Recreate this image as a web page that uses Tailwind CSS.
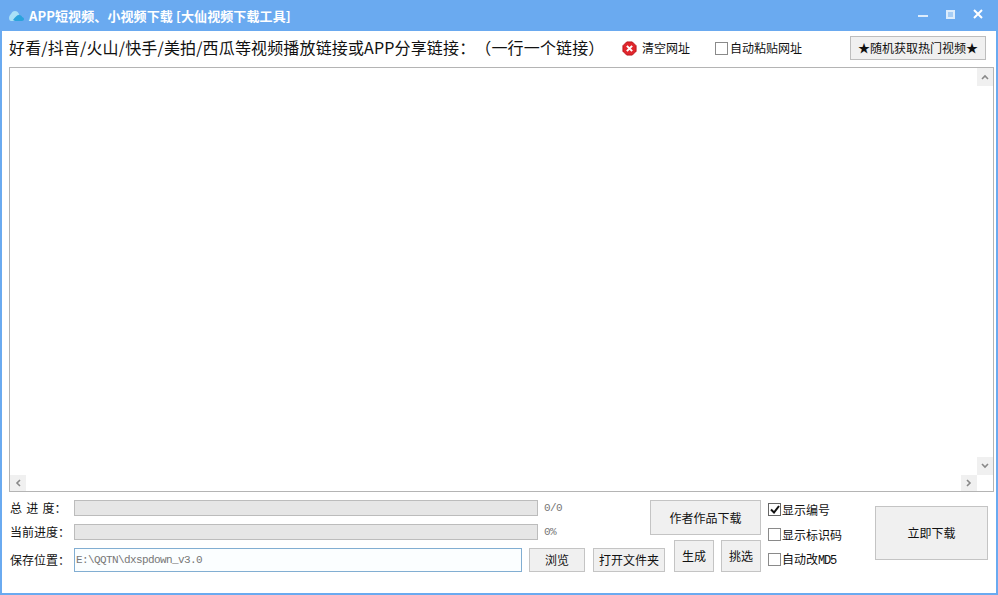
<!DOCTYPE html>
<html lang="zh-CN">
<head>
    <meta charset="UTF-8">
    <title>APP短视频、小视频下载</title>
    <script src="https://cdn.jsdelivr.net/npm/@tailwindcss/browser@4"></script>
</head>
<body class="w-[998px] h-[595px] overflow-hidden bg-white font-['Noto_Sans_CJK_SC',sans-serif] text-[#111] [text-spacing-trim:space-all]">
    <div class="h-[595px] flex flex-col border-x-[2px] border-b-[2px] border-[#6aaaf0]">
        <!-- title bar -->
        <header class="h-[31px] -mx-[2px] shrink-0 bg-[#6aaaf0] flex items-center pl-[8px] pr-[15px] text-white">
            <svg class="w-[17px] h-[14px] mr-[4px]" viewBox="0 0 17 14">
                <path d="M1 9c0-2 1-3 2-4 1-2 2-3 4-3s3 1 4 3l-1 5-3 2H3C2 12 1 11 1 9z" fill="#a9e0f7"/>
                <path d="M5 11c2-3 4-5 6-5 2 0 3 1 3 2 1 0 2 1 2 2s-1 2-2 2H7z" fill="#2ba3dc"/>
            </svg>
            <h1 class="text-[13px] font-bold leading-none tracking-[0.1px]">APP短视频、小视频下载 [大仙视频下载工具]</h1>
            <div class="ml-auto flex items-center gap-[18px]">
                <svg class="w-[10px] h-[10px] mb-[3px]" viewBox="0 0 10 10"><rect y="6" width="10" height="2" fill="#dcecfc"/></svg>
                <svg class="w-[9px] h-[9px] mb-[3px]" viewBox="0 0 9 9"><rect x="1" y="1" width="7" height="7" fill="#a6cdf5" stroke="#dcecfc" stroke-width="2"/></svg>
                <svg class="w-[10px] h-[10px] mb-[3px]" viewBox="0 0 10 10"><path d="M1 1l8 8M9 1l-8 8" stroke="#fff" stroke-width="2"/></svg>
            </div>
        </header>

        <!-- url toolbar -->
        <div class="h-[36px] shrink-0 flex items-center pl-[7px] pr-[10px] pb-[2px]">
            <p class="w-[604px] mb-[2px] text-[16px] leading-none whitespace-nowrap tracking-[0.15px]">好看/抖音/火山/快手/美拍/西瓜等视频播放链接或APP分享链接：（一行一个链接）</p>
            <svg class="w-[15px] h-[15px] ml-[9px]" viewBox="0 0 16 16">
                <path d="M5 1h6l4 4v6l-4 4H5l-4-4V5z" fill="#e0262c" stroke="#b8141a"/>
                <path d="M5.2 5.2l5.6 5.6M10.8 5.2l-5.6 5.6" stroke="#fff" stroke-width="2.2"/>
            </svg>
            <span class="ml-[5px] text-[12px] leading-none">清空网址</span>
            <span class="ml-[25px] w-[13px] h-[13px] border border-[#8a8a8a] bg-white"></span>
            <span class="ml-[2px] text-[12px] leading-none">自动粘贴网址</span>
            <button class="ml-auto w-[136px] h-[24px] bg-[#f0f0f0] border border-[#bdbdbd] text-[12px] leading-none">★随机获取热门视频★</button>
        </div>

        <!-- url list -->
        <div class="ml-[7px] mr-[2px] h-[425px] shrink-0 border border-[#b4b4b4] bg-white flex flex-col">
            <div class="flex-1 flex justify-end">
                <div class="w-[16px] flex flex-col justify-between">
                    <span class="h-[18px] bg-[#f0f0f0] flex items-center justify-center">
                        <svg class="w-[8px] h-[6px]" viewBox="0 0 8 6"><path d="M1 5l3-3 3 3" fill="none" stroke="#888" stroke-width="1.6"/></svg>
                    </span>
                    <span class="h-[18px] bg-[#f0f0f0] flex items-center justify-center">
                        <svg class="w-[8px] h-[6px]" viewBox="0 0 8 6"><path d="M1 1l3 3 3-3" fill="none" stroke="#888" stroke-width="1.6"/></svg>
                    </span>
                </div>
            </div>
            <div class="h-[16px] flex justify-between pr-[16px]">
                <span class="w-[16px] bg-[#f0f0f0] flex items-center justify-center">
                    <svg class="w-[6px] h-[8px]" viewBox="0 0 6 8"><path d="M5 1L2 4l3 3" fill="none" stroke="#888" stroke-width="1.6"/></svg>
                </span>
                <span class="w-[16px] bg-[#f0f0f0] flex items-center justify-center">
                    <svg class="w-[6px] h-[8px]" viewBox="0 0 6 8"><path d="M1 1l3 3-3 3" fill="none" stroke="#888" stroke-width="1.6"/></svg>
                </span>
            </div>
        </div>

        <!-- download controls -->
        <div class="flex-1 flex text-[12px] leading-none pl-[8px] pt-[8px]">
            <div class="w-[655px] shrink-0 flex flex-col gap-[8px]">
                <div class="flex items-center h-[16px]">
                    <span class="w-[64px] whitespace-pre [word-spacing:1.5px]">总 进 度：</span>
                    <div class="w-[464px] h-[16px] bg-[#e6e6e6] border border-[#bcbcbc]"></div>
                    <span class="ml-[6px] text-[#777] text-[11px] tracking-[-0.6px] font-['Liberation_Mono',monospace]">0/0</span>
                </div>
                <div class="flex items-center h-[16px]">
                    <span class="w-[64px]">当前进度：</span>
                    <div class="w-[464px] h-[16px] bg-[#e6e6e6] border border-[#bcbcbc]"></div>
                    <span class="ml-[6px] text-[#777] text-[11px] tracking-[-0.6px] font-['Liberation_Mono',monospace]">0%</span>
                </div>
                <div class="flex items-center h-[24px]">
                    <span class="w-[64px]">保存位置：</span>
                    <div class="w-[448px] h-[24px] border border-[#82aed2] bg-[#fbfeff] flex items-center pl-[1px] text-[#777] text-[11px] tracking-[-0.6px] font-['Liberation_Mono',monospace]">E:\QQTN\dxspdown_v3.0</div>
                    <button class="ml-[7px] w-[56px] h-[24px] bg-[#f0f0f0] border border-[#c4c4c4]">浏览</button>
                    <button class="ml-[8px] w-[72px] h-[24px] bg-[#f0f0f0] border border-[#c4c4c4]">打开文件夹</button>
                </div>
            </div>
            <div class="w-[111px] shrink-0 -ml-[15px] flex flex-col justify-between h-[72px]">
                <button class="w-[111px] h-[35px] bg-[#f0f0f0] border border-[#c4c4c4]">作者作品下载</button>
                <div class="flex justify-between">
                    <button class="ml-[24px] w-[40px] h-[32px] bg-[#f0f0f0] border border-[#c4c4c4]">生成</button>
                    <button class="w-[40px] h-[32px] bg-[#f0f0f0] border border-[#c4c4c4]">挑选</button>
                </div>
            </div>
            <div class="ml-[7px] w-[107px] shrink-0 flex flex-col gap-[12px] pt-[3px]">
                <label class="flex items-center gap-[1px] h-[13px]">
                    <span class="w-[13px] h-[13px] border border-[#666] flex items-center justify-center">
                        <svg class="w-[10px] h-[9px]" viewBox="0 0 10 9"><path d="M1 4.5l3 3 5-6.5" fill="none" stroke="#111" stroke-width="2"/></svg>
                    </span>显示编号
                </label>
                <label class="flex items-center gap-[1px] h-[13px]">
                    <span class="w-[13px] h-[13px] border border-[#8a8a8a]"></span>显示标识码
                </label>
                <label class="flex items-center gap-[1px] h-[13px]">
                    <span class="w-[13px] h-[13px] border border-[#8a8a8a]"></span><span>自动改<span class="text-[12px] tracking-[-1.2px] font-['Liberation_Mono',monospace]">MD5</span></span>
                </label>
            </div>
            <button class="mt-[6px] w-[113px] h-[54px] bg-[#f0f0f0] border border-[#c4c4c4]">立即下载</button>
        </div>
    </div>
</body>
</html>
